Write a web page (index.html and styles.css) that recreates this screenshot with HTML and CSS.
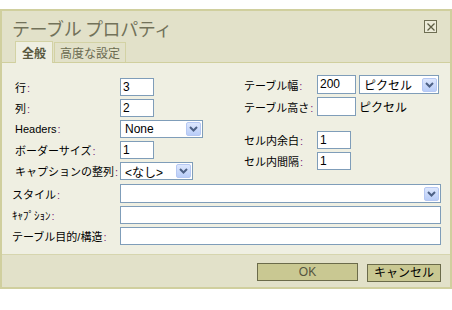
FILE: index.html
```html
<!DOCTYPE html>
<html lang="ja">
<head>
  <meta charset="UTF-8" />
  <title>テーブル プロパティ</title>
  <link rel="stylesheet" href="styles.css">
</head>
<body>
  <div class="dialog">
    <div class="dialog-head">
      <div class="title-row">
        <span class="title">テーブル プロパティ</span>
        <span class="close-btn">
          <svg width="10" height="10" viewBox="0 0 10 10"><path d="M1.5 1.5 L8.5 8.5 M8.5 1.5 L1.5 8.5" stroke="#5e5e44" stroke-width="1.3" fill="none"/></svg>
        </span>
      </div>
      <div class="tabs">
        <span class="tab active">全般</span>
        <span class="tab">高度な設定</span>
      </div>
    </div>

    <div class="dialog-body">
      <div class="top-fields">
        <div class="field-grid left-grid">
          <label>行<i>:</i></label><div class="input small">3</div>
          <label>列<i>:</i></label><div class="input small">2</div>
          <label>Headers<i>:</i></label>
          <div class="combo headers"><span>None</span><span class="arrow"><svg width="9" height="6" viewBox="0 0 9 6"><path d="M1 1 L4.5 4.5 L8 1" stroke="#4d6185" stroke-width="2" fill="none"/></svg></span></div>
          <label>ボーダーサイズ<i>:</i></label><div class="input small">1</div>
          <label>キャプションの整列<i>:</i></label>
          <div class="combo align"><span>&lt;なし&gt;</span><span class="arrow"><svg width="9" height="6" viewBox="0 0 9 6"><path d="M1 1 L4.5 4.5 L8 1" stroke="#4d6185" stroke-width="2" fill="none"/></svg></span></div>
        </div>

        <div class="right-col">
          <div class="field-grid size-grid">
            <label>テーブル幅<i>:</i></label>
            <div class="unit-row">
              <div class="input medium">200</div>
              <div class="combo unit"><span>ピクセル</span><span class="arrow"><svg width="9" height="6" viewBox="0 0 9 6"><path d="M1 1 L4.5 4.5 L8 1" stroke="#4d6185" stroke-width="2" fill="none"/></svg></span></div>
            </div>
            <label>テーブル高さ<i>:</i></label>
            <div class="unit-row">
              <div class="input medium"></div>
              <span class="unit-text">ピクセル</span>
            </div>
          </div>
          <div class="field-grid cell-grid">
            <label>セル内余白<i>:</i></label><div class="input small">1</div>
            <label>セル内間隔<i>:</i></label><div class="input small">1</div>
          </div>
        </div>
      </div>

      <div class="field-grid wide-grid">
        <label>スタイル<i>:</i></label>
        <div class="combo wide"><span></span><span class="arrow"><svg width="9" height="6" viewBox="0 0 9 6"><path d="M1 1 L4.5 4.5 L8 1" stroke="#4d6185" stroke-width="2" fill="none"/></svg></span></div>
        <label>ｷｬﾌﾟｼｮﾝ<i>:</i></label><div class="input"></div>
        <label>テーブル目的/構造<i>:</i></label><div class="input"></div>
      </div>
    </div>

    <div class="dialog-foot">
      <button class="btn ok">OK</button>
      <button class="btn cancel">キャンセル</button>
    </div>
  </div>
</body>
</html>
```

FILE: styles.css
```css
:root {
  --frame: #d0cf9e;
  --head: #e2e1c9;
  --panel: #efefe2;
  --field-border: #7f9db9;
}
* {
  margin: 0;
  padding: 0;
  box-sizing: border-box;
}
body {
  background: #fff;
  font-family: "Liberation Sans", "Noto Sans CJK JP", sans-serif;
  font-size: 11px;
  color: #000;
}
.dialog {
  margin-top: 9px;
  width: 452px;
  height: 280px;
  border: 2px solid var(--frame);
  background: var(--panel);
  display: flex;
  flex-direction: column;
}
.dialog-head {
  background: var(--head);
  border-bottom: 1px solid var(--frame);
  height: 52px;
  padding: 0 0 0 10px;
  display: flex;
  flex-direction: column;
}
.title-row {
  display: flex;
  justify-content: space-between;
  align-items: flex-start;
  padding: 6px 13px 0 0;
  height: 30px;
}
.title {
  font-size: 18px;
  line-height: 22px;
  color: #72725a;
  font-family: "Noto Sans CJK JP", sans-serif;
  letter-spacing: -0.4px;
}
.close-btn {
  margin-top: 3px;
  width: 13px;
  height: 13px;
  border: 1px solid #6e6e52;
  background: #ecebd9;
  display: flex;
  align-items: center;
  justify-content: center;
}
.tabs {
  display: flex;
  gap: 1px;
  padding-left: 3px;
  height: 21px;
  align-items: flex-end;
}
.tab {
  border: 1px solid #d3d2a4;
  border-bottom: none;
  height: 20px;
  padding: 0 5px;
  font-size: 12px;
  line-height: 19px;
  color: #6a6a50;
  font-family: "Noto Sans CJK JP", sans-serif;
}
.tab.active {
  height: 22px;
  margin-bottom: -1px;
  background: var(--panel);
  font-weight: bold;
  color: #58583e;
  padding: 0 6px;
  line-height: 21px;
}
.dialog-body {
  flex: 1;
  padding: 12px 9px 0 0;
}
.top-fields {
  display: flex;
}
.field-grid {
  display: grid;
  align-items: center;
}
.field-grid label {
  white-space: nowrap;
  font-family: "Liberation Sans", "Noto Sans CJK JP", sans-serif;
}
.field-grid label i {
  font-style: normal;
  color: #7a2a7a;
  margin-left: 1px;
}
.left-grid {
  width: 242px;
  padding: 3px 0 0 13px;
  grid-template-columns: 105px auto;
  grid-auto-rows: 18px;
  row-gap: 3px;
  justify-items: start;
}
.right-col {
  display: flex;
  flex-direction: column;
}
.size-grid {
  grid-template-columns: 73px auto;
  grid-auto-rows: 19px;
  row-gap: 3px;
}
.cell-grid {
  margin-top: 15px;
  grid-template-columns: 73px auto;
  grid-auto-rows: 18px;
  row-gap: 3px;
  justify-items: start;
}
.unit-row {
  display: flex;
  align-items: center;
  gap: 3px;
  height: 19px;
}
.unit-text {
  font-family: "Noto Sans CJK JP", sans-serif;
  font-size: 12px;
}
.input {
  height: 18px;
  border: 1px solid var(--field-border);
  background: #fff;
  padding: 0 2px;
  font-size: 12px;
  line-height: 16px;
  width: 100%;
}
.input.small {
  width: 34px;
}
.input.medium {
  width: 39px;
  height: 19px;
}
.combo {
  height: 18px;
  border: 1px solid var(--field-border);
  background: #fff;
  display: flex;
  justify-content: space-between;
  align-items: center;
  padding: 0 1px 0 4px;
  font-size: 12px;
  font-family: "Liberation Sans", "Noto Sans CJK JP", sans-serif;
}
.combo.headers {
  width: 83px;
}
.combo.align {
  width: 73px;
}
.combo.unit {
  width: 80px;
  height: 19px;
}
.combo.wide {
  width: 100%;
  height: 19px;
}
.arrow {
  width: 15px;
  height: 14px;
  border: 1px solid #b6c8f3;
  border-radius: 2px;
  background: linear-gradient(#dde7fd, #b9cdf8);
  display: flex;
  align-items: center;
  justify-content: center;
}
.wide-grid {
  margin-top: 4px;
  padding-left: 10px;
  grid-template-columns: 108px 1fr;
  grid-auto-rows: 19px;
  row-gap: 2px;
}
.dialog-foot {
  height: 33px;
  background: var(--head);
  border-top: 1px solid #d6d5ae;
  display: flex;
  justify-content: flex-end;
  align-items: flex-start;
  gap: 9px;
  padding: 8px 9px 0 0;
}
.btn {
  height: 18px;
  background: #c9c892;
  border: 1px solid #6b6b4a;
  font-family: "Liberation Sans", "Noto Sans CJK JP", sans-serif;
  font-size: 12px;
  line-height: 16px;
  color: #000;
}
.btn.ok {
  width: 101px;
  color: #55553f;
}
.btn.cancel {
  width: 74px;
  margin-top: 1px;
}
```
